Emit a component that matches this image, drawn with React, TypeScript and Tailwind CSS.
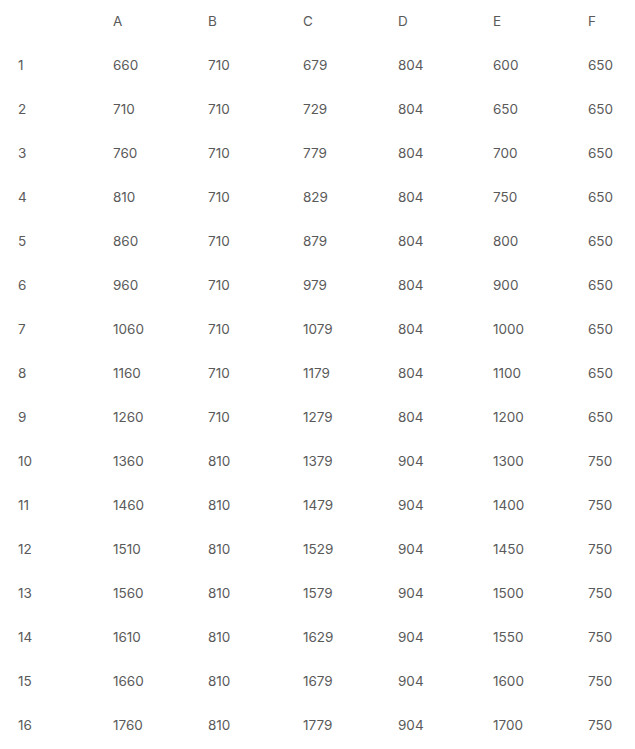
const cols = ['A', 'B', 'C', 'D', 'E', 'F']

const rows: number[][] = [
  [660, 710, 679, 804, 600, 650],
  [710, 710, 729, 804, 650, 650],
  [760, 710, 779, 804, 700, 650],
  [810, 710, 829, 804, 750, 650],
  [860, 710, 879, 804, 800, 650],
  [960, 710, 979, 804, 900, 650],
  [1060, 710, 1079, 804, 1000, 650],
  [1160, 710, 1179, 804, 1100, 650],
  [1260, 710, 1279, 804, 1200, 650],
  [1360, 810, 1379, 904, 1300, 750],
  [1460, 810, 1479, 904, 1400, 750],
  [1510, 810, 1529, 904, 1450, 750],
  [1560, 810, 1579, 904, 1500, 750],
  [1610, 810, 1629, 904, 1550, 750],
  [1660, 810, 1679, 904, 1600, 750],
  [1760, 810, 1779, 904, 1700, 750],
]

export default function App() {
  return (
    <div
      className="min-h-screen bg-white overflow-hidden text-[13.5px] text-[#5a5a5a]"
      style={{ fontFamily: 'Inter, "Noto Sans", sans-serif' }}
    >
      <div>
        {/* header */}
        <div className="flex h-[44px] items-center -mt-[1px]">
          <div className="w-[95px] shrink-0 pl-[18px]"></div>
          {cols.map(c => (
            <div key={c} className="w-[95px] shrink-0 pl-[18px]">{c}</div>
          ))}
        </div>

        {rows.map((r, i) => (
          <div key={i} className="flex h-[44px] items-center">
            <div className="w-[95px] shrink-0 pl-[18px]">{i + 1}</div>
            {r.map((v, j) => (
              <div key={j} className="w-[95px] shrink-0 pl-[18px]">{v}</div>
            ))}
          </div>
        ))}
      </div>
    </div>
  )
}
